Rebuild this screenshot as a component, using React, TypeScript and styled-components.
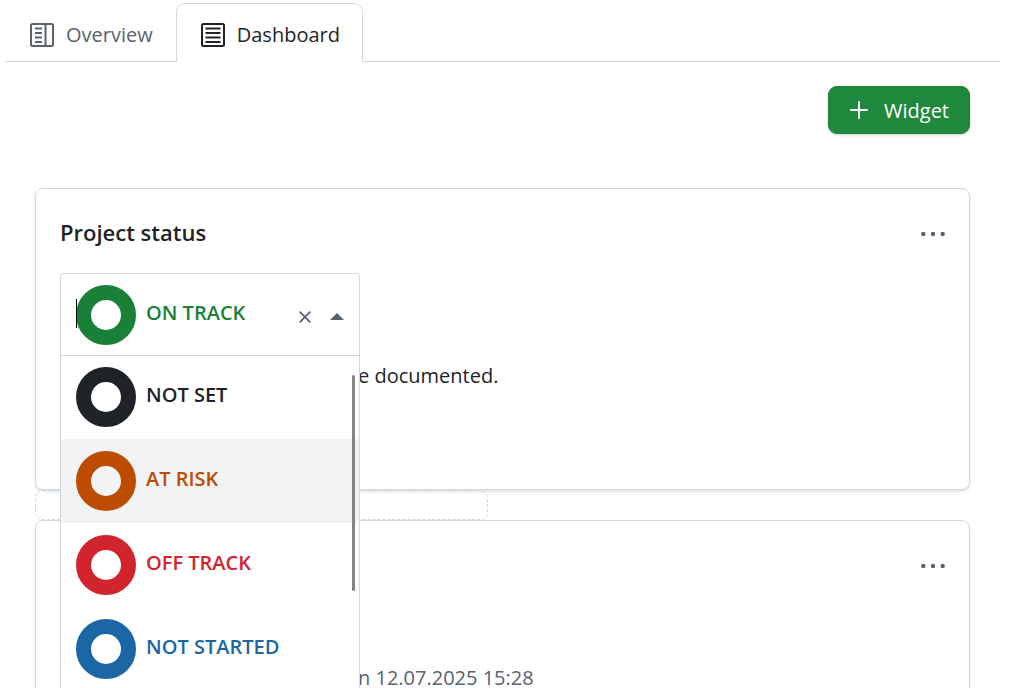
import React, { useState } from 'react';
import styled, { createGlobalStyle } from 'styled-components';

const line = '#d0d9e0';
const muted = '#59636e';
const ink = '#1f2328';

const GlobalStyle = createGlobalStyle`
  *, *::before, *::after { box-sizing: border-box; }
  body {
    margin: 0;
    background: #fff;
    color: ${ink};
    font-family: "Segoe UI", "Open Sans", "Noto Sans", sans-serif;
    font-size: 20px;
    line-height: 30px;
  }
  button, input { font: inherit; color: inherit; }
`;

const Page = styled.div`
  height: 100vh;
  overflow: hidden;
  padding: 3px 21px 0 5px;
`;

const Tabs = styled.nav`
  display: flex;
  height: 59px;
  box-shadow: inset 0 -1px ${line};
`;

const Tab = styled.a<{ $active?: boolean }>`
  display: flex;
  align-items: center;
  gap: 12px;
  padding: 4px 22px 0 24px;
  text-decoration: none;
  color: ${(p) => (p.$active ? ink : muted)};
  background: ${(p) => (p.$active ? '#fff' : 'transparent')};
  border: 1px solid ${(p) => (p.$active ? line : 'transparent')};
  border-bottom: 0;
  border-radius: 9px 9px 0 0;
`;

const Content = styled.main`
  padding: 24px 30px 0;
`;

const Toolbar = styled.div`
  display: flex;
  justify-content: flex-end;
  margin-bottom: 54px;
`;

const PrimaryButton = styled.button`
  display: flex;
  align-items: center;
  gap: 16px;
  height: 48px;
  padding: 2px 20px 0 21px;
  color: #fff;
  background: #1f883d;
  border: 1px solid #1c8139;
  border-radius: 9px;
  box-shadow: 0 1px 3px rgba(31, 35, 40, 0.2);
`;

const Card = styled.section`
  min-height: 302px;
  padding: 24px;
  background: #fff;
  border: 1px solid ${line};
  border-radius: 8px;
  box-shadow: 0 2px 3px rgba(31, 35, 40, 0.12);
`;

const CardHeader = styled.header`
  display: flex;
  align-items: center;
  justify-content: space-between;
  height: 42px;
  margin-bottom: 18px;
`;

const CardTitle = styled.h2`
  margin: 0;
  padding-bottom: 4px;
  font-size: 22px;
  font-weight: 600;
`;

const IconButton = styled.button`
  display: flex;
  margin-left: auto;
  padding: 0;
  background: none;
  border: 0;
  color: ${muted};
`;

const DropZone = styled.div`
  width: calc(50% - 15px);
  height: 30px;
  border: 1px dashed #d5d8db;
  border-radius: 8px;
`;

const Combo = styled.div`
  position: relative;
  z-index: 1;
  width: 300px;
`;

const ComboField = styled.div`
  display: flex;
  align-items: center;
  height: 83px;
  padding: 0 15px;
  border: 1px solid ${line};
  border-radius: 3px 3px 0 0;
  background: #fff;
`;

const Caret = styled.span`
  position: absolute;
  left: 16px;
  top: 26px;
  width: 1px;
  height: 29px;
  background: #000;
`;

const ComboInput = styled.input`
  flex: 1;
  min-width: 0;
  margin-left: 10px;
  padding: 0 0 4px;
  border: 0;
  outline: 0;
  background: none;
  color: #1a7f37;
  font-weight: 600;
`;

const ComboActions = styled.div`
  display: flex;
  align-items: center;
  gap: 19px;
  padding-top: 4px;
`;

const Menu = styled.ul`
  position: absolute;
  top: 82px;
  left: 0;
  right: 0;
  margin: 0;
  padding: 0;
  list-style: none;
  background: #fff;
  border: 1px solid ${line};
  border-top-width: 0;
  box-shadow: inset 0 1px ${line};
`;

const Option = styled.li<{ $color: string; $active?: boolean }>`
  display: flex;
  align-items: center;
  gap: 10px;
  height: 84px;
  padding: 0 15px;
  color: ${(p) => p.$color};
  background: ${(p) => (p.$active ? '#f1f3f5' : 'transparent')};
  font-weight: 600;
`;

const OptionLabel = styled.span`
  padding-bottom: 4px;
`;

const Ring = styled.span<{ $color: string }>`
  flex: none;
  width: 60px;
  height: 60px;
  border: 15px solid ${(p) => p.$color};
  border-radius: 50%;
`;

const ScrollThumb = styled.li`
  position: absolute;
  top: 20px;
  right: 4px;
  width: 3px;
  height: 216px;
  border-radius: 2px;
  background: #858585;
`;

const Description = styled.p`
  margin: 5px 0 0;
  padding-left: 298px;
`;

const Updated = styled(Description)`
  margin-top: 76px;
  color: ${muted};
`;

const statuses = [
  { label: 'NOT SET', color: '#1f2328' },
  { label: 'AT RISK', color: '#bc4c00' },
  { label: 'OFF TRACK', color: '#d1242f' },
  { label: 'NOT STARTED', color: '#1b67a5' },
];

const OverviewIcon = () => (
  <svg width="24" height="24" viewBox="0 0 24 24" fill="none" stroke="currentColor" strokeWidth="2" aria-hidden="true">
    <rect x="1" y="1" width="22" height="22" rx="1.5" />
    <path d="M15.5 1v22M5 5.5h7M5 10h7M5 14.5h7M5 19h7" />
  </svg>
);

const DashboardIcon = () => (
  <svg width="24" height="24" viewBox="0 0 24 24" fill="none" stroke="currentColor" strokeWidth="2" aria-hidden="true">
    <rect x="1" y="1" width="22" height="22" rx="1.5" />
    <path d="M4.5 5.5h15M4.5 10h15M4.5 14.5h15M4.5 19h15" />
  </svg>
);

const PlusIcon = () => (
  <svg width="18" height="20" viewBox="0 0 18 20" fill="none" stroke="currentColor" strokeWidth="2" strokeLinecap="round" aria-hidden="true">
    <path d="M9 1v16M1 9h16" />
  </svg>
);

const DotsIcon = () => (
  <svg width="24" height="6" viewBox="0 0 24 6" fill="currentColor" aria-hidden="true">
    <circle cx="2.3" cy="3" r="2.2" />
    <circle cx="12" cy="3" r="2.2" />
    <circle cx="21.7" cy="3" r="2.2" />
  </svg>
);

const ClearIcon = () => (
  <svg width="12" height="12" viewBox="0 0 12 12" fill="none" stroke="currentColor" strokeWidth="1.8" aria-hidden="true">
    <path d="M.7.7l10.6 10.6M11.3.7L.7 11.3" />
  </svg>
);

const ArrowUpIcon = () => (
  <svg width="14" height="7" viewBox="0 0 14 7" fill="currentColor" aria-hidden="true">
    <path d="M7 0l7 7H0z" />
  </svg>
);

export default function App() {
  const [active, setActive] = useState('AT RISK');
  return (
    <>
      <GlobalStyle />
      <Page>
        <Tabs>
          <Tab href="#overview"><OverviewIcon />Overview</Tab>
          <Tab href="#dashboard" $active aria-current="page"><DashboardIcon />Dashboard</Tab>
        </Tabs>
        <Content>
          <Toolbar>
            <PrimaryButton type="button"><PlusIcon />Widget</PrimaryButton>
          </Toolbar>
          <Card>
            <CardHeader>
              <CardTitle id="status-title">Project status</CardTitle>
              <IconButton type="button"><DotsIcon /></IconButton>
            </CardHeader>
            <Combo>
              <ComboField>
                <Ring $color="#1a7f37" />
                <Caret />
                <ComboInput role="combobox" aria-labelledby="status-title" aria-expanded="true" aria-controls="status-list" defaultValue="ON TRACK" />
                <ComboActions>
                  <IconButton type="button"><ClearIcon /></IconButton>
                  <IconButton type="button"><ArrowUpIcon /></IconButton>
                </ComboActions>
              </ComboField>
              <Menu id="status-list" role="listbox">
                {statuses.map((s) => (
                  <Option
                    key={s.label}
                    role="option"
                    aria-selected={false}
                    $color={s.color}
                    $active={active === s.label}
                    onMouseEnter={() => setActive(s.label)}
                  >
                    <Ring $color={s.color} />
                    <OptionLabel>{s.label}</OptionLabel>
                  </Option>
                ))}
                <ScrollThumb role="presentation" />
              </Menu>
            </Combo>
            <Description>e documented.</Description>
          </Card>
          <DropZone />
          <Card>
            <CardHeader>
              <IconButton type="button"><DotsIcon /></IconButton>
            </CardHeader>
            <Updated>n 12.07.2025 15:28</Updated>
          </Card>
        </Content>
      </Page>
    </>
  );
}
